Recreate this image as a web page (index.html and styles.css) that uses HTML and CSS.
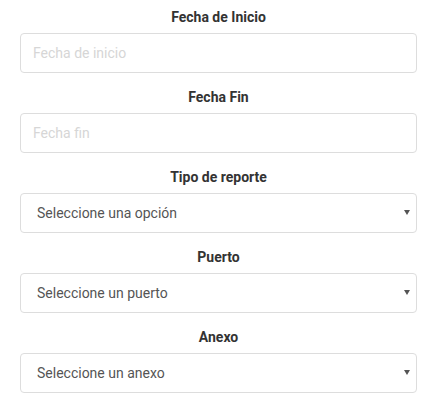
FILE: index.html
```html
<!DOCTYPE html>
<html lang="es">
<head>
  <meta charset="UTF-8">
  <title>Reporte</title>
  <link rel="stylesheet" href="styles.css">
</head>
<body>
  <form class="report-form">
    <div class="field">
      <label for="inicio">Fecha de Inicio</label>
      <input id="inicio" type="text" placeholder="Fecha de inicio">
    </div>
    <div class="field">
      <label for="fin">Fecha Fin</label>
      <input id="fin" type="text" placeholder="Fecha fin">
    </div>
    <div class="field">
      <label for="tipo">Tipo de reporte</label>
      <div class="select-wrap">
        <select id="tipo"><option>Seleccione una opción</option></select>
        <span class="arrow"></span>
      </div>
    </div>
    <div class="field">
      <label for="puerto">Puerto</label>
      <div class="select-wrap">
        <select id="puerto"><option>Seleccione un puerto</option></select>
        <span class="arrow"></span>
      </div>
    </div>
    <div class="field">
      <label for="anexo">Anexo</label>
      <div class="select-wrap">
        <select id="anexo"><option>Seleccione un anexo</option></select>
        <span class="arrow"></span>
      </div>
    </div>
  </form>
</body>
</html>
```

FILE: styles.css
```css
body {
  margin: 0;
  background-color: #ffffff;
  font-family: Roboto, "Liberation Sans", sans-serif;
  color: #333;
}
.report-form {
  padding: 7px 24px 0 20px;
}
.field {
  margin-bottom: 14px;
}
.field label {
  display: block;
  text-align: center;
  font-size: 14px;
  font-weight: bold;
  line-height: 20px;
  margin-bottom: 6px;
  color: #333;
}
.field input,
.field select {
  display: block;
  box-sizing: border-box;
  width: 100%;
  height: 40px;
  border: 1px solid #ddd;
  border-radius: 4px;
  background: #fff;
  font-family: inherit;
  font-size: 14px;
  outline: none;
}
.field input {
  padding: 0 12px;
  color: #555;
}
.field input::placeholder {
  color: #d6d6d6;
}
.field select {
  -webkit-appearance: none;
  appearance: none;
  padding: 0 30px 0 16px;
  color: #555;
}
.select-wrap {
  position: relative;
}
.arrow {
  position: absolute;
  right: 7px;
  top: 17px;
  width: 0;
  height: 0;
  border-left: 3px solid transparent;
  border-right: 3px solid transparent;
  border-top: 5px solid #555;
  pointer-events: none;
}
```
